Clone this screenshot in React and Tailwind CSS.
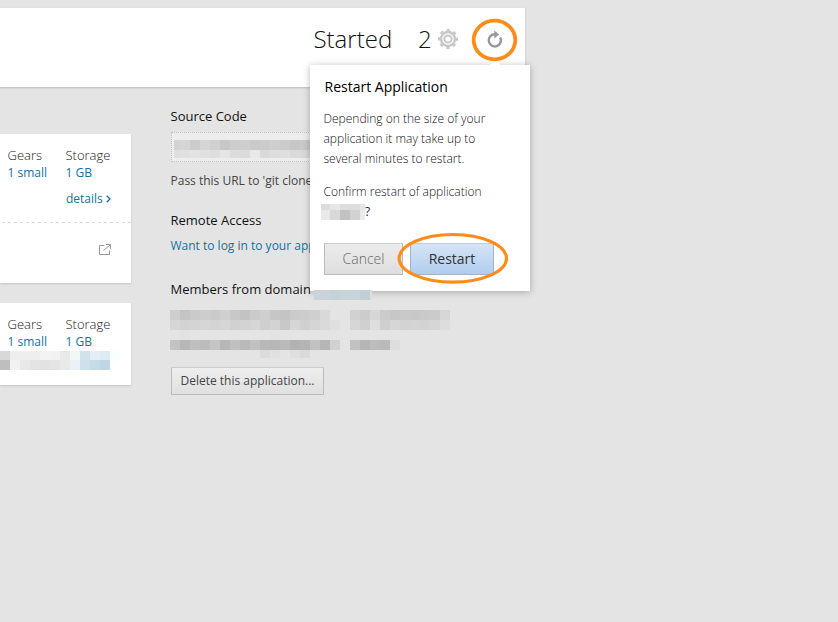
import React from "react";

/* Rows of redacted text, each cell a ten pixel block. */
const SOURCE = [
  "#d3d3d3 #d5d5d5 #cccccc #d5d5d5 #d1d1d1 #c7c7c7 #cdcdcd #cecece #cacaca #cccccc #cfcfcf #cbcbcb #c7c7c7 #c9c9c9",
  "#dfdfdf #e0e0e0 #e3e3e3 #e0e0e0 #dedede #e5e5e5 #dcdcdc #dbdbdb #e8e8e8 #dadada #dedede #dfdfdf #dadada #d8d8d8",
];
const MEMBERS = [
  "#cecece #c4c4c4 #cacaca #cdcdcd #cacaca #d0d0d0 #c8c8c8 #c3c3c3 #cbcbcb #cfcfcf #c6c6c6 #c4c4c4 #cbcbcb #cccccc #cfcfcf #d9d9d9 #e4e4e4 #e4e4e4 #d1d1d1 #cccccc #d7d7d7 #cbcbcb #c7c7c7 #c9c9c9 #c8c8c8 #cacaca #cbcbcb #d7d7d7",
  "#d6d6d6 #d3d3d3 #d4d4d4 #d6d6d6 #d4d4d4 #d6d6d6 #d1d1d1 #d3d3d3 #d6d6d6 #cfcfcf #d3d3d3 #c8c8c8 #d6d6d6 #d0d0d0 #d5d5d5 #dadada #dfdfdf #e4e4e4 #d6d6d6 #d0d0d0 #dedede #cfcfcf #d6d6d6 #d3d3d3 #d4d4d4 #d3d3d3 #d6d6d6 #dddddd",
  "#e4e4e4 #e2e2e2 #e4e4e4 #e4e4e4 #e4e4e4 #e4e4e4 #e4e4e4 #e4e4e4 #e4e4e4 #e4e4e4 #e2e2e2 #e4e4e4 #e4e4e4 #e4e4e4 #e4e4e4 #e4e4e4 #e4e4e4",
  "#c3c3c3 #b7b7b7 #bfbfbf #bcbcbc #c5c5c5 #b7b7b7 #c0c0c0 #b9b9b9 #c1c1c1 #b8b8b8 #b7b7b7 #bababa #b2b2b2 #b4b4b4 #c2c2c2 #b6b6b6 #d1d1d1 #e4e4e4 #c2c2c2 #b5b5b5 #bcbcbc #bababa #dddddd",
  "#e4e4e4 #e4e4e4 #e4e4e4 #e4e4e4 #e4e4e4 #e4e4e4 #e4e4e4 #e4e4e4 #e4e4e4 #dbdbdb #e0e0e0 #e4e4e4 #dfdfdf #dadada",
];
const CARD = [
  "#d8d8d8 #eeeeee #eeeeee #eeeeee #f3f3f3 #f2f2f2 #e9e9e9 #f3f7f8 #d1e2eb #e5eef6 #dfebf2 #fcfefe",
  "#bebebe #f1f1f1 #e8e8e8 #e4e4e4 #e2e2e2 #e4e4e4 #e9e9e9 #ebf1f6 #cfe0eb #c5dce8 #bed7e4",
];
const NAME = ["#dcdcdc #e6e6e6 #dedede #dddddd #e5e5e5", "#e9e9e9 #d8d8d8 #c2c2c2 #d2d2d2 #ebebeb"];

function Blocks({ rows, rowClass = "h-[10px]", firstClass = "w-[10px]" }) {
  return (
    <div>
      {rows.map((row, r) => (
        <div key={r} className={`flex ${rowClass}`}>
          {row.split(" ").map((color, c) => (
            <span
              key={c}
              className={`shrink-0 ${c === 0 ? firstClass : "w-[10px]"}`}
              style={{ backgroundColor: color }}
            />
          ))}
        </div>
      ))}
    </div>
  );
}

function Stats() {
  return (
    <div className="flex pl-[7.5px] text-[13px] leading-[17px] font-light">
      <div className="w-[58px]">
        <div className="text-[#222]">Gears</div>
        <div className="text-[12px] font-normal text-[#0f73a3]">1 small</div>
      </div>
      <div>
        <div className="text-[#222]">Storage</div>
        <div className="text-[12px] font-normal text-[#0f73a3]">1 GB</div>
      </div>
    </div>
  );
}

function Gear() {
  return (
    <svg className="h-5 w-5" viewBox="0 0 20 20" fill="none" stroke="#c8c8c8">
      <circle cx="10" cy="10" r="7" strokeWidth="2.4" />
      <circle cx="10" cy="10" r="8.8" strokeWidth="2.4" strokeDasharray="3.4 3.5115" strokeDashoffset="1.7" />
      <circle cx="10" cy="10" r="3.6" strokeWidth="2" />
    </svg>
  );
}

function Popover() {
  return (
    <section className="absolute top-[65px] left-[310px] h-[226px] w-[220px] bg-white pt-3 pl-[14px] shadow-[0_1px_7px_rgba(0,0,0,0.28)]">
      <span className="absolute -top-[4px] left-[181px] h-2 w-2 rotate-45 bg-white" />
      <h2 className="pl-[0.5px] text-[14px] leading-5 text-black">Restart Application</h2>
      <p className="mt-3 -ml-[0.5px] text-[12px] leading-5 font-light text-[#111]">
        Depending on the size of your
        <br />
        application it may take up to
        <br />
        several minutes to restart.
      </p>
      <p className="mt-[13px] -ml-[0.5px] text-[12px] leading-5 font-light text-[#111]">Confirm restart of application</p>
      <div className="-ml-[3px] flex h-5 items-start">
        <div className="w-[44px] overflow-hidden pt-[2px]">
          <div className="h-4 overflow-hidden">
            <Blocks rows={NAME} rowClass="h-[6px] last:h-[10px]" firstClass="w-[9px]" />
          </div>
        </div>
        <span className="text-[12px] leading-5 text-[#222]">?</span>
      </div>
      <div className="mt-[21px] flex gap-[7px]">
        <button className="h-8 w-[79px] rounded-[1px] border border-[#b9b9b9] border-t-[#cccccc] bg-linear-to-b from-[#ececec] to-[#dedede] pb-px text-[14px] font-light text-[#666]">
          Cancel
        </button>
        <button className="h-8 w-[84px] rounded-[1px] border border-[#a5b4c5] border-t-[#bfccdb] bg-linear-to-b from-[#d6e4f5] to-[#afcdf0] pb-px text-[14px] text-[#333]">
          Restart
        </button>
      </div>
    </section>
  );
}

export default function App() {
  return (
    <div className="relative h-[622px] w-[838px] overflow-hidden bg-[#e4e4e4] pt-2 font-['Open_Sans',sans-serif] whitespace-nowrap">
      <header className="flex h-[79px] w-[525px] bg-white pl-[313.5px] shadow-[0_1px_2px_rgba(0,0,0,0.18)]">
        <span className="mt-[13px] w-[104.5px] text-[24px] leading-9 font-light text-[#111]">Started</span>
        <span className="mt-[13px] w-[20px] text-[24px] leading-9 font-light text-[#111]">2</span>
        <span className="mt-[21px]">
          <Gear />
        </span>
        <svg className="mt-[22px] ml-[27px] h-5 w-5" viewBox="0 0 20 20">
          <path d="M10 4.2 A6.1 6.1 0 1 0 15.2 7.4" fill="none" stroke="#999" strokeWidth="2.5" />
          <path d="M9.3 .4 L14 4.6 L9.3 8.4 Z" fill="#999" />
        </svg>
      </header>

      <main className="flex">
        <div className="w-[131px] pt-[47px]">
          <section className="h-[149px] bg-white pt-[13px] shadow-[0_1px_2px_rgba(0,0,0,0.15)]">
            <Stats />
            <div className="mt-2 flex items-center pl-[66px] text-[12px] leading-5 text-[#0f73a3]">
              details
              <svg className="ml-[3px] h-2 w-[5px]" viewBox="0 0 5 8" fill="none" stroke="currentColor" strokeWidth="1.3">
                <path d="M.7 .8 L4 4 L.7 7.2" />
              </svg>
            </div>
            <svg className="mt-[13px] block h-px w-full" viewBox="0 0 131 1">
              <path d="M-4 .5H131" stroke="#d4d4d4" strokeDasharray="3 3" />
            </svg>
            <svg className="mt-[21px] ml-[99px] h-3 w-3" viewBox="0 0 12 12" fill="none" stroke="#999">
              <path d="M5.5 1.5H.5V10.5H10.5V6.5M7 .5H11.5V5M11 1L4.5 6.5" />
            </svg>
          </section>
          <section className="mt-5 h-[82px] bg-white pt-[13px] shadow-[0_1px_2px_rgba(0,0,0,0.15)]">
            <Stats />
            <div className="mt-px">
              <Blocks rows={CARD} rowClass="h-[9px] last:h-[10px]" />
            </div>
          </section>
        </div>

        <div className="w-[354px] pt-5 pl-[39px] text-[13px] text-[#111]">
          <h3 className="pl-[0.5px] leading-[18px]">Source Code</h3>
          <div className="mt-[7px] ml-px h-[30px] overflow-hidden border border-dotted border-[#bfbfbf] bg-[#ededed] pt-[7px] pl-[2px]">
            <Blocks rows={SOURCE} rowClass="h-[10px] last:h-[8px]" firstClass="w-[6px]" />
          </div>
          <p className="mt-[10px] w-[141px] overflow-hidden pl-[0.5px] text-[12px] leading-[18px] text-[#444]">
            Pass this URL to &apos;git clone
          </p>
          <h3 className="mt-[21px] pl-[0.5px] leading-[18px]">Remote Access</h3>
          <p className="mt-[8px] w-[141px] overflow-hidden pl-[0.5px] text-[12px] leading-[18px] text-[#0f73a3]">
            Want to log in to your app
          </p>
          <h3 className="mt-[25px] pl-[0.5px] leading-[18px]">Members from domain</h3>
          <div className="mt-3">
            <Blocks rows={MEMBERS} rowClass="h-[10px] last:h-[8px]" />
          </div>
          <button className="mt-[9px] ml-px block h-[28px] w-[153px] rounded-[1px] border border-[#bbbbbb] border-t-[#cccccc] bg-linear-to-b from-[#eeeeee] to-[#e0e0e0] text-[12px] text-[#444]">
            Delete this application...
          </button>
        </div>
      </main>

      <Popover />

      <div className="absolute top-[290px] left-[314px] flex h-[10px]">
        <span className="w-4 bg-[#c9d3d9]" />
        <span className="w-[10px] bg-[#c4d2d9]" />
        <span className="w-5 bg-[#c9d4d9]" />
        <span className="w-[10px] bg-[#c1cfd5]" />
        <span className="w-[2px] bg-[#dddddd]" />
      </div>
      <svg className="absolute top-0 left-0 h-[300px] w-[540px]" viewBox="0 0 540 300" fill="none" stroke="#ff8c19">
        <ellipse cx="494.5" cy="40" rx="20.8" ry="19.3" strokeWidth="3.8" />
        <ellipse cx="452.8" cy="258.3" rx="53.7" ry="23.8" strokeWidth="3.2" />
      </svg>
    </div>
  );
}
